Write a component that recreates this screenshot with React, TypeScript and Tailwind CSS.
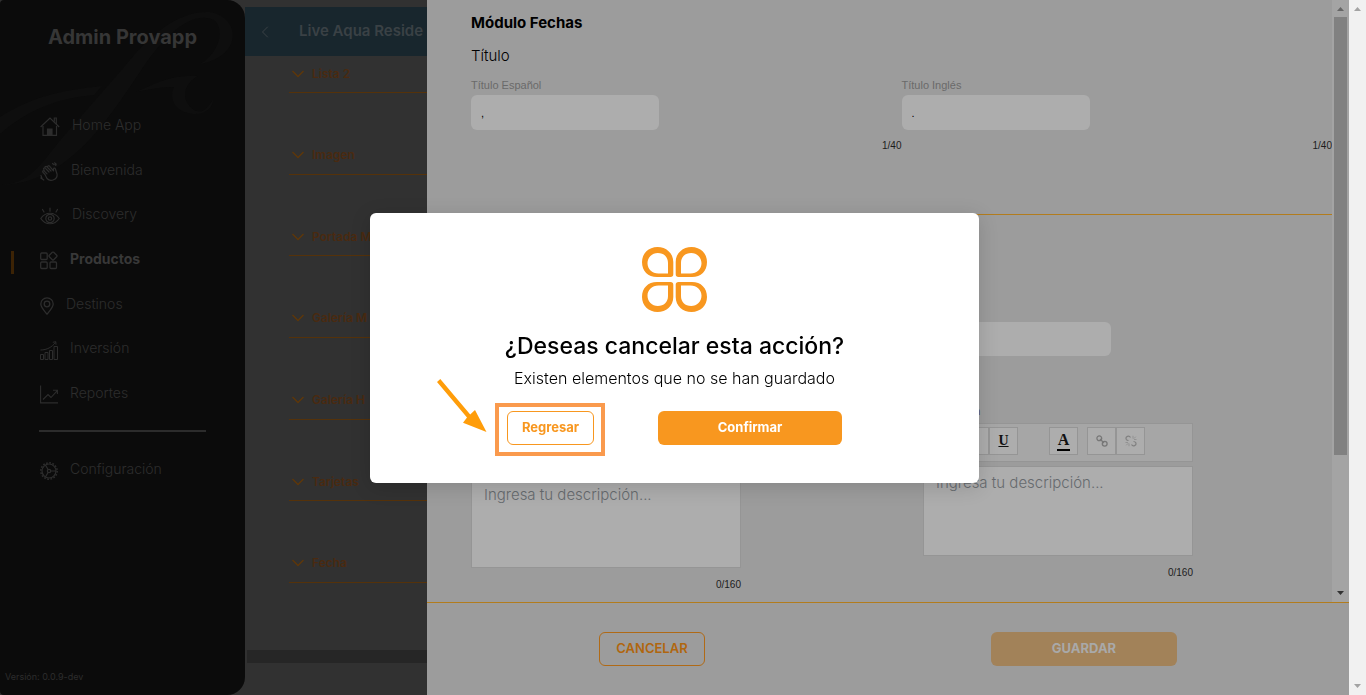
import React from "react";
import { ChevronLeft } from "lucide-react";

const sections = [
  "Lista 2",
  "Imagen",
  "Portada M",
  "Galería M",
  "Galería H",
  "Tarjetas",
  "Fecha",
];

const HomeIcon = () => (
  <svg width="20" height="20" viewBox="0 0 20 20" fill="none" stroke="currentColor" strokeWidth="1.2">
    <path d="M0.6 10 10 1l9.2 9" />
    <path d="M3 9v9.3h13.5V9M14.3 4.8V1h2v6" />
    <path d="M7.5 18v-6h4.500v6z" fill="currentColor" />
  </svg>
);

const HandIcon = () => (
  <svg width="19" height="20" viewBox="0 0 19 20" fill="none" stroke="currentColor" strokeWidth="1.2" strokeLinecap="round" strokeLinejoin="round">
    <path d="M5 12.500 3 10.300c-1-1.100.3-2.200 1.300-1.200L7 11.800M4.300 9 3.800 7.300c-.6-1.300.9-2 1.700-1L9 10M5 6c-.4-1.600 1-2.200 2-1.200L11 9M7.500 4.800c.2-1.400 1.500-1.300 2.200-.5l3.800 4.500V7c.2-1.400 1.900-1.200 2 .2l1.500 4.800c.9 5.500-6.500 8.500-10 4.500L5 12.500" />
    <path d="M12.500 1.500l1.500 1.200M14.500.8l1.800 1.400M15.800 3.400l-.6-1M1 13.500 2.200 17M.8 16l3 2" />
  </svg>
);

const EyeIcon = () => (
  <svg width="20" height="18" viewBox="0 0 20 18" fill="none" stroke="currentColor" strokeWidth="1.200" strokeLinecap="round">
    <path d="M.8 11.500C5.500 4.500 14.500 4.500 19.200 11.500 14.500 18.500 5.500 18.500.8 11.500z" />
    <circle cx="10" cy="11.500" r="4.200" />
    <circle cx="10" cy="11.500" r="1.700" />
    <path d="M10 1v3.200M2.500 2.500 4 5M17.500 2.500 16 5" />
  </svg>
);

const GridIcon = () => (
  <svg width="18" height="19" viewBox="0 0 18 19" fill="none" stroke="currentColor" strokeWidth="1.300">
    <rect x=".7" y="2" width="6.500" height="6.500" rx="1" />
    <rect x=".7" y="11" width="6.500" height="6.500" rx="1" />
    <rect x="10" y="11" width="6.500" height="6.500" rx="1" />
    <rect x="9.900" y="1.900" width="6.200" height="6.200" rx="1" transform="rotate(45 13 5)" />
  </svg>
);

const PinIcon = () => (
  <svg width="14" height="18" viewBox="0 0 14 18" fill="none" stroke="currentColor" strokeWidth="1.300">
    <path d="M7 17.200C4 13.500.8 10.200.8 7a6.200 6.200 0 0 1 12.400 0c0 3.200-3.200 6.500-6.200 10.200z" />
    <circle cx="7" cy="7" r="2.800" />
  </svg>
);

const BarsIcon = () => (
  <svg width="18" height="19" viewBox="0 0 18 19" fill="none" stroke="currentColor" strokeWidth="1">
    <path d="M.5 13.500h3v5h-3zM5 11.500h3v7H5zM9.500 9.500h3v9h-3zM14 5.500h3.500v13H14z" />
    <path d="M.5 9C7 9 12 6 15.500 1.500M12.800 1.300l3-.6.2 3" />
  </svg>
);

const ReportIcon = () => (
  <svg width="18" height="19" viewBox="0 0 18 19" fill="none" stroke="currentColor" strokeWidth="1.100">
    <path d="M.6.5v17.400H18M3 14.500 8 9.500l3 3 6.300-6.800M13 5.200h4.400V9" />
  </svg>
);

const GearIcon = () => (
  <svg width="18" height="18" viewBox="0 0 18 18" fill="none" stroke="currentColor" strokeWidth="1.200">
    <circle cx="9" cy="9" r="7" />
    <circle cx="9" cy="9" r="8.200" strokeWidth="1.500" strokeDasharray="1.700 1.520" />
    <circle cx="9" cy="9" r="1.700" />
    <path d="M10.700 9H16M8.100 7.500 5.400 3M8.100 10.500 5.400 15" />
  </svg>
);

const menu = [
  { label: "Home App", icon: <HomeIcon /> },
  { label: "Bienvenida", icon: <HandIcon /> },
  { label: "Discovery", icon: <EyeIcon /> },
  { label: "Productos", icon: <GridIcon />, active: true },
  { label: "Destinos", icon: <PinIcon /> },
  { label: "Inversión", icon: <BarsIcon /> },
  { label: "Reportes", icon: <ReportIcon /> },
];

function Sidebar() {
  return (
    <aside className="relative flex w-[245px] shrink-0 flex-col overflow-hidden rounded-l-sm rounded-r-[18px] bg-[#0b0b0b] text-[#2d2d2d]">
      <svg className="absolute top-0 left-0" width="245" height="190" viewBox="0 0 245 190" fill="#0e0e0e" aria-hidden="true">
        <path d="M0 185C30 184 40 165 62 138L125 66C150 34 180 10 210 12c30 5 34 44-10 52 18-10 26-34 14-44-22-10-48 14-70 46-34 50-74 118-144 119z" />
        <path d="M0 117c35-22 65-27 102-31l-8 9C60 98 30 108 0 134zM136 92c18-8 36-18 62-16-12 6-20 22-4 34 10 5 14-4 19-10 0 8-8 15-20 14-17-2-25-14-19-27-12 0-25 2-38 5z" />
      </svg>
      <h1 className="relative pt-[25px] text-center text-xl leading-6 font-bold text-[#363636]">
        Admin Provapp
      </h1>
      <nav className="relative mt-[54px] flex flex-col">
        <div className="grid h-[312px] grid-rows-7">
          {menu.map((item) => (
            <a
              key={item.label}
              href="#"
              className={
                item.active
                  ? "relative flex items-center gap-3 pl-10 text-sm font-bold text-[#383838]"
                  : "relative flex items-center gap-3 pl-10 text-sm font-light"
              }
            >
              {item.active && (
                <span className="absolute left-[11px] h-[23px] w-[3px] translate-y-1 bg-[#3c2305]" />
              )}
              <span className="mt-1 text-[#2d2d2d]">{item.icon}</span>
              {item.label}
            </a>
          ))}
        </div>
        <hr className="mx-[39px] mt-[15px] border-t-2 border-[#2c2c2c]" />
        <a href="#" className="mt-[26px] flex items-center gap-3 pl-10 text-sm font-light">
          <span className="mt-1">
            <GearIcon />
          </span>
          Configuración
        </a>
      </nav>
      <p className="mt-auto pb-[11px] pl-[5px] text-[9px] leading-[14px]">
        Versión: 0.0.9-dev
      </p>
    </aside>
  );
}

function ProductColumn() {
  return (
    <main className="flex w-[182px] shrink-0 flex-col overflow-hidden bg-[#313131] pt-[7px] whitespace-nowrap">
      <header className="flex h-[49px] shrink-0 items-center bg-[#18262d] pl-[10px] text-[#3a4145]">
        <button aria-label="Atrás" className="mr-6">
          <ChevronLeft size={20} strokeWidth={1.200} />
        </button>
        <h2 className="text-[15px] font-semibold">Live Aqua Reside</h2>
      </header>
      <div className="ml-11 flex h-[527px] flex-col justify-between">
        {sections.map((name) => (
          <button
            key={name}
            className="flex h-[37px] shrink-0 items-center gap-2 border-b border-[#55320a] pb-px pl-[3px] text-xs font-semibold text-[#4a2a10]"
          >
            <svg width="12" height="8" viewBox="0 0 12 8" fill="none" stroke="#5e370a" strokeWidth="1.400" className="shrink-0">
              <path d="m.5 1 5.500 5.500L11.500 1" />
            </svg>
            {name}
          </button>
        ))}
      </div>
      <div className="mt-[67px] ml-[2px] h-[13px] shrink-0 bg-[#262626]" />
    </main>
  );
}

function TitleField({ id, label, value }: { id: string; label: string; value: string }) {
  return (
    <div className="flex flex-col">
      <label htmlFor={id} className="text-[11px] leading-[14px] text-[#6a6a6a]">
        {label}
      </label>
      <input
        id={id}
        defaultValue={value}
        className="mt-[3px] h-[35px] w-[188px] rounded-md bg-[#adadad] px-[10px] text-[11px] text-black outline-none"
      />
      <span className="mt-2 text-right text-[10px] leading-4 text-[#1c1c1c]">1/40</span>
    </div>
  );
}

const toolClass =
  "flex h-7 w-[29px] items-center justify-center border border-[#959595] bg-[#adadad] font-['Liberation_Serif',serif] font-bold text-[#111]";

function Editor({ id, className }: { id: string; className?: string }) {
  return (
    <div className={className}>
      <input aria-label="Fecha" className="h-[34px] w-[188px] rounded-md bg-[#adadad] px-[10px] outline-none" />
      <div className="mt-12 flex flex-col">
        <label htmlFor={id} className="text-[11px] leading-[14px] text-[#55506a]">
          Descripción
        </label>
        <div className="mt-[5px] flex h-[39px] items-start border border-[#959595] bg-[#a6a6a6] pt-[3px] pl-[7px] text-sm">
          <button className={toolClass}>B</button>
          <button className={toolClass}>
            <i>I</i>
          </button>
          <button className={toolClass}>
            <u>U</u>
          </button>
          <button className={`ml-[31px] ${toolClass}`} aria-label="Color de texto">
            <span className="border-b-2 border-black px-px text-base leading-[18px]">A</span>
          </button>
          <button className={`ml-[9px] ${toolClass}`} aria-label="Enlace">
            <svg width="12" height="12" viewBox="0 0 12 12" fill="none" stroke="#777" strokeWidth="1.300">
              <circle cx="3.300" cy="3.300" r="2.400" />
              <circle cx="8.700" cy="8.700" r="2.400" />
              <path d="m4 4 4 4" />
            </svg>
          </button>
          <button className={toolClass} aria-label="Quitar enlace">
            <svg width="12" height="12" viewBox="0 0 12 12" fill="none" stroke="#808080" strokeWidth="1.200">
              <path d="M5.500 2.500C4-.2.200 1.500 1.200 4.200c.5 1 1.300 1.300 2.300 1.300M6.500 9.500c1.500 2.700 5.300 1 4.300-1.700-.5-1-1.300-1.300-2.300-1.300" />
              <path d="M8 3.500V.8M9 4.500h2.500M8.800 3.700l2-2M4 8.500v2.700M3 7.500H.5M3.200 8.300l-2 2" strokeWidth=".6" />
            </svg>
          </button>
        </div>
        <textarea
          id={id}
          placeholder="Ingresa tu descripción..."
          className="mt-1 h-[90px] resize-none border border-[#959595] bg-[#adadad] px-3 py-1 font-['Inter',sans-serif] text-[15px] leading-6 font-light outline-none placeholder:text-[#666a6e]"
        />
        <span className="mt-[9px] text-right text-[10px] leading-4 text-[#1c1c1c]">0/160</span>
      </div>
    </div>
  );
}

function Drawer() {
  return (
    <section className="flex min-w-0 flex-1 flex-col bg-[#9c9c9c] font-['Liberation_Sans',sans-serif]">
      <div className="flex min-h-0 flex-1">
        <div className="min-w-0 flex-1 overflow-hidden pl-11">
          <h3 className="pt-[13px] font-['Inter',sans-serif] text-[15px] leading-5 font-bold text-black">
            Módulo Fechas
          </h3>
          <p className="mt-3 font-['Inter',sans-serif] text-[15px] leading-[22px] font-light text-black">
            Título
          </p>
          <div className="mt-[11px] grid grid-cols-2">
            <TitleField id="titulo-es" label="Título Español" value="," />
            <TitleField id="titulo-en" label="Título Inglés" value="." />
          </div>
          <hr className="mt-[60px] border-[#b27c1d]" />
          <div className="mt-[107px] grid grid-cols-[270px_270px] gap-x-[182px]">
            <Editor id="desc-es" className="pt-3" />
            <Editor id="desc-en" />
          </div>
        </div>
        <div className="flex w-[17px] flex-col items-center bg-[#a4a4a4]">
          <svg width="17" height="17" viewBox="0 0 17 17" fill="#666">
            <path d="M5 11h7L8.500 7z" />
          </svg>
          <div className="h-[438px] w-[13px] bg-[#818181]" />
          <svg className="mt-auto" width="17" height="17" viewBox="0 0 17 17" fill="#333">
            <path d="M5 6h7l-3.500 4z" />
          </svg>
        </div>
      </div>
      <footer className="grid h-[93px] shrink-0 grid-cols-2 items-center justify-items-center border-t border-[#b27c1d] pr-[49px] pl-[9px] font-['Inter',sans-serif] text-[13px]">
        <button className="h-[34px] w-[106px] rounded-md border border-[#b06a16] font-semibold text-[#b0660f]">
          CANCELAR
        </button>
        <button className="h-[34px] w-[186px] rounded-md bg-[#a28259] font-bold text-[#a9a9a9]">
          GUARDAR
        </button>
      </footer>
    </section>
  );
}

function PageScrollbar() {
  return (
    <div className="flex w-[17px] shrink-0 flex-col justify-between bg-[#f1f1f1]">
      <svg width="17" height="17" viewBox="0 0 17 17" fill="#a3a3a3">
        <path d="M5 11h7L8.500 7z" />
      </svg>
      <svg width="17" height="17" viewBox="0 0 17 17" fill="#a3a3a3">
        <path d="M5 6h7l-3.500 4z" />
      </svg>
    </div>
  );
}

const petal =
  "M15.500 0C6.500 0 0 6.500 0 15 0 24 6 30 15 30H28.500c1.800 0 2.800-1 2.800-2.800V15C31.300 6 24 0 15.500 0zM15.800 6C22 6 26 10 26 16v10.500H16.500C10 26.500 5.500 22 5.500 16.300 5.500 10.500 10 6 15.800 6z";

function CancelDialog() {
  return (
    <div className="fixed inset-y-0 right-[17px] left-0 flex items-center justify-center">
      <div
        role="dialog"
        aria-labelledby="cancel-title"
        className="relative flex h-[270px] w-[609px] flex-col items-center rounded-md bg-white pt-[34px] text-black shadow-[0_4px_20px_rgba(0,0,0,0.15)]"
      >
        <svg width="65" height="65" viewBox="0 0 65 65" fill="#f8971f" fillRule="evenodd">
          <path d={petal} />
          <path d={petal} transform="translate(65 0) scale(-1 1)" />
          <path d={petal} transform="translate(0 65) scale(1 -1)" />
          <path d={petal} transform="translate(65 65) scale(-1 -1)" />
        </svg>
        <h2 id="cancel-title" className="mt-5 text-[23px] leading-7 font-medium">
          ¿Deseas cancelar esta acción?
        </h2>
        <p className="mt-[6px] text-base leading-6 font-light">
          Existen elementos que no se han guardado
        </p>
        <div className="mt-[21px] flex w-[335px] justify-between text-[13px] font-bold">
          <div className="relative">
            <button className="h-[34px] w-[87px] rounded-md border border-[#f8971f] text-[#f8971f]">
              Regresar
            </button>
            {/* highlight box and arrow */}
            <span className="pointer-events-none absolute -top-2 -left-3 h-[53px] w-[110px] border-4 border-[#fa9a4d]" />
            <svg className="pointer-events-none absolute -top-8 right-full mr-5" width="50" height="54" viewBox="0 0 50 54" fill="#ff9d0a">
              <path d="M3.300 0 33.200 35.500 38 31 49.500 53 26 43.800 30 38.500 0 3z" />
            </svg>
          </div>
          <button className="h-[34px] w-[184px] rounded-md bg-[#f8971f] text-white">
            Confirmar
          </button>
        </div>
      </div>
    </div>
  );
}

export default function App() {
  return (
    <div className="flex h-screen overflow-hidden bg-[#313131] font-['Inter',sans-serif]">
      <Sidebar />
      <ProductColumn />
      <Drawer />
      <PageScrollbar />
      <CancelDialog />
    </div>
  );
}
